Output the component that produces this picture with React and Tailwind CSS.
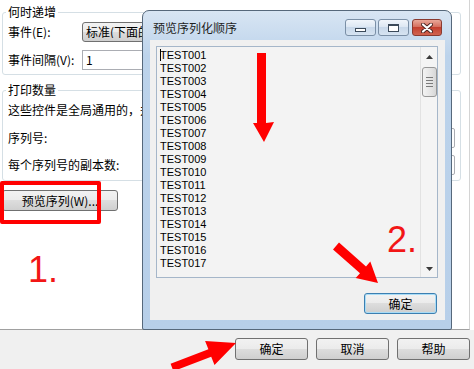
import React from 'react'

const winBtn =
  'flex items-center justify-center rounded-[3px] border border-[#707070] bg-[linear-gradient(#f2f2f2_0%,#ebebeb_50%,#dddddd_50%,#cfcfcf_100%)] text-[12px] leading-none text-black'

const field = 'h-[20px] border border-[#abadb3] bg-white pl-[3px] text-[12px] leading-[18px]'

const items = Array.from({ length: 17 }, (_, i) => `TEST${String(i + 1).padStart(3, '0')}`)

function GroupBox({ title, className = '', children }) {
  return (
    <fieldset className={`ml-[2px] w-[459px] rounded-[3px] border border-[#d5dfe5] px-[5px] ${className}`}>
      <legend className="-ml-[2px] px-[2px] text-[12px] leading-[14px]">{title}</legend>
      {children}
    </fieldset>
  )
}

function Triangle({ up }) {
  return (
    <svg width="7" height="4" viewBox="0 0 7 4">
      <polygon points={up ? '3.5,0 7,4 0,4' : '0,0 7,0 3.5,4'} fill="#3a3a3a" />
    </svg>
  )
}

function ScrollBar() {
  return (
    <div className="flex w-[17px] flex-col border-l border-[#e2e2e2] bg-[#f4f4f4]">
      <div className="flex h-[17px] items-center justify-center pt-[2px]">
        <Triangle up />
      </div>
      <div className="mx-auto mt-[3px] flex h-[30px] w-[15px] flex-col items-center justify-center gap-[2px] rounded-[3px] border border-[#979797] bg-[linear-gradient(90deg,#f3f3f3,#e4e4e4_60%,#d7d7d7)]">
        <div className="h-px w-[7px] bg-[#7a7a7a]" />
        <div className="h-px w-[7px] bg-[#7a7a7a]" />
        <div className="h-px w-[7px] bg-[#7a7a7a]" />
        <div className="h-px w-[7px] bg-[#7a7a7a]" />
      </div>
      <div className="flex-1" />
      <div className="flex h-[17px] items-center justify-center">
        <Triangle />
      </div>
    </div>
  )
}

function CaptionButtons() {
  return (
    <div className="flex items-center">
      <div className="flex h-[17px] w-[31px] items-end justify-center rounded-[3px] border border-[#7a8fa6] bg-[linear-gradient(#f0f5fb,#dbe6f2_50%,#c8d8ea_50%,#d6e3f1)] pb-[3px]">
        <div className="h-[4px] w-[11px] border border-[#3b4a5a] bg-white" />
      </div>
      <div className="ml-[2px] flex h-[17px] w-[31px] items-center justify-center rounded-[3px] border border-[#7a8fa6] bg-[linear-gradient(#f0f5fb,#dbe6f2_50%,#c8d8ea_50%,#d6e3f1)]">
        <div className="h-[8px] w-[11px] border border-t-2 border-[#3b4a5a] bg-white" />
      </div>
      <div className="ml-[3px] flex h-[17px] w-[30px] items-center justify-center rounded-[3px] border border-[#8a3a30] bg-[linear-gradient(#e9a899,#d6705f_45%,#c4402f_50%,#d0634f)]">
        <svg width="12" height="10" viewBox="0 0 12 10">
          <path d="M2 1.5 L10 8.5 M10 1.5 L2 8.5" stroke="#4a2420" strokeWidth="4" strokeLinecap="round" />
          <path d="M2 1.5 L10 8.5 M10 1.5 L2 8.5" stroke="#ffffff" strokeWidth="2.2" strokeLinecap="round" />
        </svg>
      </div>
    </div>
  )
}

function Dialog() {
  return (
    <div className="absolute left-[142px] top-[10px] flex h-[320px] w-[310px] flex-col rounded-t-[7px] rounded-b-[2px] border border-[#56687b] bg-[linear-gradient(#d8e5f3,#bcd3eb_45px,#b7cfe9)]">
      <div className="flex h-[29px] items-center pl-[10px] pr-[9px] pt-[4px]">
        <span className="flex-1 text-[12px] leading-[14px] text-[#1e1e1e]">预览序列化顺序</span>
        <CaptionButtons />
      </div>
      <div className="ml-[7px] mr-[6px] flex h-[280px] flex-col bg-[#f0f0f0]">
        <div className="ml-[6px] mt-[6px] flex h-[232px] w-[282px] border border-[#a5b6c9] bg-[#f3f3f3]">
          <div className="flex-1 pl-[3px] pt-[2px] font-['Liberation_Sans',Arial,sans-serif] text-[11px] leading-[13px] text-black">
            {items.map((t, i) => (
              <div key={t}>
                {i === 0 && <span className="-mr-px inline-block h-[12px] w-px bg-black align-[-2px]" />}
                {t}
              </div>
            ))}
          </div>
          <ScrollBar />
        </div>
        <div className="ml-auto mr-[8px] mt-[15px] flex h-[21px] w-[73px] items-center justify-center rounded-[3px] border border-[#3c7fb1] bg-[linear-gradient(#f2f2f2_0%,#ebebeb_50%,#dddddd_50%,#cfcfcf_100%)] text-[12px] leading-none shadow-[inset_0_0_0_1px_#a9dcf6]">
          确定
        </div>
      </div>
    </div>
  )
}

function Annotations() {
  return (
    <>
      <div className="absolute left-0 top-[181px] h-[43px] w-[101px] rounded-[2px] border-4 border-[#ff0000]" />
      <span className="absolute left-[28px] top-[252px] font-['Liberation_Sans',Arial,sans-serif] text-[36px] leading-[36px] text-[#f21616]">
        1.
      </span>
      <span className="absolute left-[387px] top-[222px] font-['Liberation_Sans',Arial,sans-serif] text-[36px] leading-[36px] text-[#f21616]">
        2.
      </span>
      <svg className="pointer-events-none absolute inset-0" width="474" height="369" viewBox="0 0 474 369">
        <polygon fill="#ff0000" points="257,53 266,53 266,123 274,122 264,142 253,123 257,123" />
        <polygon
          fill="#ff0000"
          points="339,242.6 366,266.4 370.3,261.5 378,283 355.7,278 360,273.2 333,249.4"
        />
        <polygon
          fill="#ff0000"
          points="170.6,363.8 208.4,349.3 205.1,340.9 236,343 214.5,365.1 211.2,356.7 173.4,371.2"
        />
      </svg>
    </>
  )
}

export default function App() {
  return (
    <div className="relative h-[369px] w-[474px] overflow-hidden bg-white font-['Noto_Sans_CJK_SC',sans-serif] text-[12px] text-black">
      <div className="h-[330px] w-[470px] border-b border-r border-b-[#a0a0a0] border-r-[#d4d4d4] pt-[5px]">
        <GroupBox title="何时递增" className="pb-[4px]">
          <div className="mt-[3px] flex h-[20px] items-center">
            <span className="w-[74px] leading-[14px]">事件(E):</span>
            <div className={`${winBtn} h-[20px] w-[240px] !justify-start pl-[3px]`}>
              <span className="block w-[56px] overflow-hidden whitespace-nowrap">标准(下面的</span>
            </div>
          </div>
          <div className="mt-[8px] flex h-[20px] items-center">
            <span className="w-[74px] leading-[14px]">事件间隔(V):</span>
            <div className={`${field} w-[240px]`}>1</div>
          </div>
        </GroupBox>
        <GroupBox title="打印数量" className="mt-[8px] pb-[5px]">
          <p className="mt-[6px] w-[134px] overflow-hidden whitespace-nowrap leading-[14px]">这些控件是全局通用的，并</p>
          <div className="mt-[11px] flex h-[20px] items-center justify-between">
            <span className="leading-[14px]">序列号:</span>
            <div className={`${field} w-[160px] rounded-[2px]`} />
          </div>
          <div className="mt-[7px] flex h-[20px] items-center justify-between">
            <span className="leading-[14px]">每个序列号的副本数:</span>
            <div className={`${field} w-[160px] rounded-[2px]`} />
          </div>
        </GroupBox>
        <div className={`${winBtn} ml-[2px] mt-[9px] h-[21px] w-[116px]`}>预览序列(W)...</div>
      </div>
      <div className="flex h-[39px] justify-end gap-[8px] bg-[#f0f0f0] pr-[4px] pt-[8px]">
        <div className={`${winBtn} h-[22px] w-[73px]`}>确定</div>
        <div className={`${winBtn} h-[22px] w-[73px]`}>取消</div>
        <div className={`${winBtn} h-[22px] w-[73px]`}>帮助</div>
      </div>
      <Dialog />
      <Annotations />
    </div>
  )
}
